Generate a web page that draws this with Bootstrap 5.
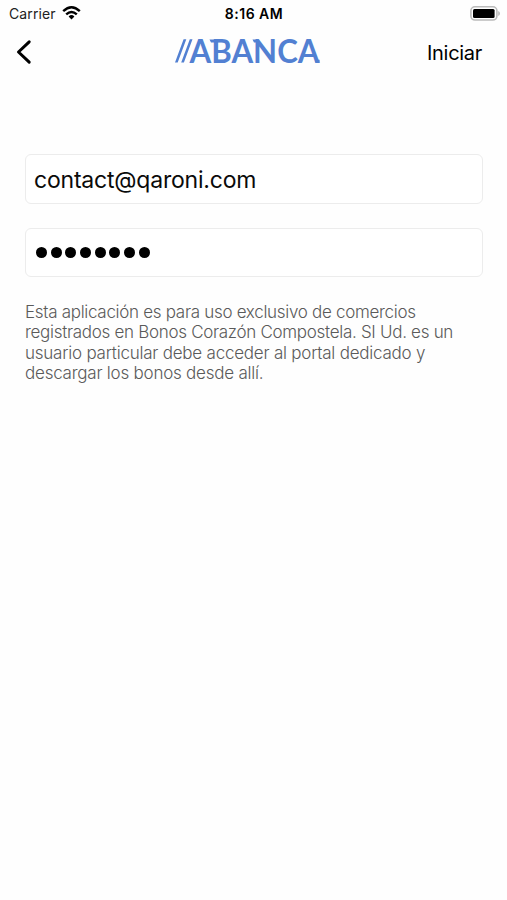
<!DOCTYPE html>
<html lang="es">
<head>
<meta charset="utf-8">
<meta name="viewport" content="width=device-width, initial-scale=1">
<title>ABANCA</title>
<link href="https://cdn.jsdelivr.net/npm/bootstrap@5.3.0/dist/css/bootstrap.min.css" rel="stylesheet">
<style>
body { font-family: Inter, "Liberation Sans", sans-serif; background: #fefefe; color: #000; }
.screen { height: 900px; }
.status-bar { height: 27px; padding: 0 7px 0 9px; line-height: 27px; font-size: 14px; }
.carrier { color: #222; letter-spacing: .1px; }
.wifi { margin-left: 6px; margin-top: -2px; }
.clock { font-weight: 600; letter-spacing: .5px; margin-right: 1px; }
.top-bar { height: 50px; padding: 0 25px 0 15px; }
.back { padding-bottom: 2px; }
.brand { margin-right: 2px; }
.action { font-size: 20px; letter-spacing: -.3px; line-height: 50px; padding-top: 1px; }
.login { padding: 77px 24px 0 25px; }
.field { height: 50px; padding: 3px 9px 0 8px; border: 1px solid #ececec; border-radius: 6px; background: #fff; font-size: 23px; letter-spacing: -.2px; color: #0a0a0a; }
.field + .field { height: 49px; padding-top: 0; margin-top: 24px; }
.dots { gap: 3.7px; padding-left: 2px; }
.dots span { width: 11px; height: 11px; border-radius: 50%; background: #000; }
.notice { margin: 25px 0 0; font-size: 17px; font-weight: 300; line-height: 20.4px; letter-spacing: -.3px; color: #5a5a5a; white-space: nowrap; }
.notice .looser { letter-spacing: -.23px; }
</style>
</head>
<body>
<div class="screen d-flex flex-column overflow-hidden">
  <div class="status-bar row g-0 align-items-center">
    <div class="col d-flex align-items-center">
      <span class="carrier">Carrier</span>
      <svg class="wifi" width="19" height="14" viewBox="0 0 19 14" fill="none" stroke="#000" stroke-width="2.4"><path d="M1.2 5.2Q9.5-2.6 17.8 5.2M4.2 8.4Q9.5 3.4 14.8 8.4"/><path d="M6.6 10.4Q9.5 7.8 12.4 10.4L9.5 13.4Z" fill="#000" stroke="none"/></svg>
    </div>
    <div class="col-auto clock">8:16 AM</div>
    <div class="col d-flex justify-content-end">
      <svg width="30" height="15" viewBox="0 0 30 15"><rect x=".9" y=".8" width="26" height="13.2" rx="4" fill="#fff" stroke="#bbb" stroke-width="1.6"/><rect x="3" y="3" width="21.6" height="9" rx="1.5" fill="#000"/><path d="M28.2 5v5q1.8-.8 1.8-2.5t-1.8-2.5z" fill="#bbb"/></svg>
    </div>
  </div>
  <nav class="top-bar row g-0 align-items-center">
    <div class="back col d-flex"><svg width="18" height="26" viewBox="0 0 18 26" fill="none" stroke="#000" stroke-width="3" stroke-linecap="round" stroke-linejoin="round"><path d="M14.2 2.8 3.5 13 14.2 23.2"/></svg></div>
    <div class="brand col-auto d-flex">
      <svg width="146" height="48" viewBox="0 -7 146 48" fill="#5280d2"><path d="M0 26.5 8.6 3.2h2.7L2.7 26.5ZM6.2 26.5 14.8 3.2h2.7L8.9 26.5Z"/><path d="M34.5 3.5h6v3h-4.5ZM77.5 3.5h6v3h-4.5ZM140 23.7h4.6v2.8h-4.6Z"/><text x="14.5" y="26.5" font-family="Lato, sans-serif" font-size="32" font-weight="700" textLength="130" lengthAdjust="spacingAndGlyphs">ABANCA</text></svg>
    </div>
    <div class="col text-end action">Iniciar</div>
  </nav>
  <main class="login">
    <div class="field d-flex align-items-center">contact@qaroni.com</div>
    <div class="field d-flex align-items-center"><div class="dots d-flex" role="img" aria-label="Contraseña"><span></span><span></span><span></span><span></span><span></span><span></span><span></span><span></span></div></div>
    <p class="notice">Esta aplicación es para uso exclusivo de comercios<br>registrados en Bonos Corazón Compostela. SI Ud. es un<br><span class="looser">usuario particular debe acceder al portal dedicado y<br>descargar los bonos desde allí.</span></p>
  </main>
</div>
<script src="https://cdn.jsdelivr.net/npm/bootstrap@5.3.0/dist/js/bootstrap.bundle.min.js"></script>
</body>
</html>
